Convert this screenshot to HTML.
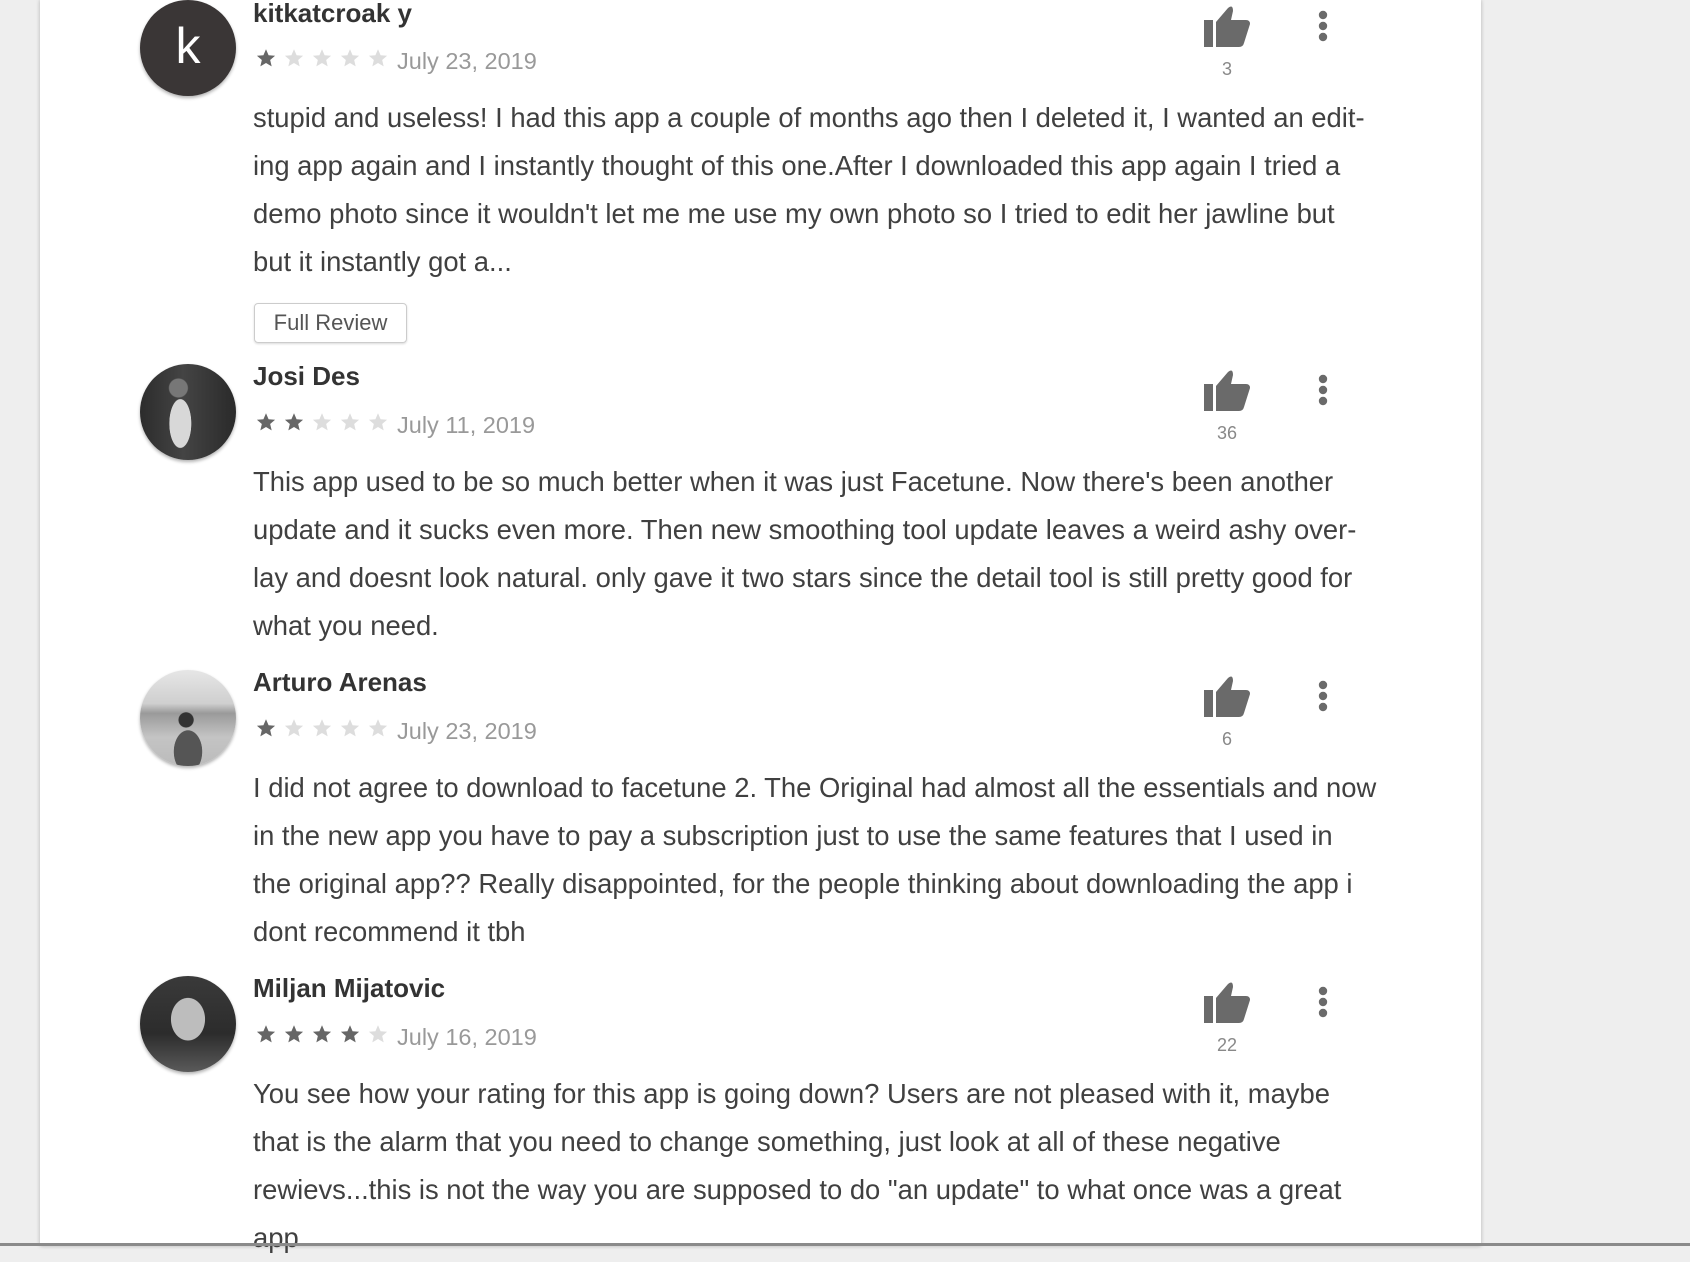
<!DOCTYPE html>
<html><head><meta charset="utf-8">
<style>
html,body{margin:0;padding:0}
body{width:1690px;height:1246px;background:#eeeeee;position:relative;overflow:hidden;font-family:"Liberation Sans",sans-serif}
.card{position:absolute;left:40px;top:0;width:1441px;height:1246px;background:#fff;box-shadow:0 0 4px rgba(0,0,0,.25)}
.bar{position:absolute;left:0;top:1243px;width:1690px;height:3px;background:#8a8a8a}
.av{position:absolute;left:140px;width:96px;height:96px;border-radius:50%;box-shadow:0 2px 3px rgba(0,0,0,.3);overflow:hidden}
.name{position:absolute;left:253px;font-size:26px;font-weight:bold;color:#333;line-height:30px;white-space:nowrap}
.stars{position:absolute;left:256px;height:26px;white-space:nowrap}
.stars svg{display:inline-block;margin-right:8px;vertical-align:middle}
.date{position:absolute;left:397px;font-size:23.5px;color:#999;line-height:28px}
.txt{position:absolute;left:253px;font-size:27.4px;color:#404040;white-space:nowrap;line-height:48px}
.thumb{position:absolute;left:1204px}
.cnt{position:absolute;left:1204px;width:46px;text-align:center;font-size:18px;color:#888}
.dots{position:absolute;left:1318px}
.btn{position:absolute;left:254px;top:303px;width:151px;height:38px;border:1px solid #ccc;border-radius:4px;box-shadow:0 1px 2px rgba(0,0,0,.15);font-size:22px;color:#555;text-align:center;line-height:38px}
</style></head><body>
<div class="card"></div>

<svg width="0" height="0" style="position:absolute">
<defs>
<symbol id="st" viewBox="0 0 24 24"><path d="M12 1.5l3.1 7.2 7.8.6-5.9 5.1 1.8 7.6L12 18l-6.8 4 1.8-7.6-5.9-5.1 7.8-.6z"/></symbol>
<symbol id="th" viewBox="0 0 46 42"><rect x="0" y="15" width="9" height="27" fill="#6a6a6a"/><path d="M12 42V17L24 3Q29 -1 29 6L27 15H42Q46 15 46 19L40 38Q39 42 35 42Z" fill="#6a6a6a"/></symbol>
<symbol id="dt" viewBox="0 0 10 32"><circle cx="5" cy="5" r="4.2" fill="#6a6a6a"/><circle cx="5" cy="16" r="4.2" fill="#6a6a6a"/><circle cx="5" cy="27" r="4.2" fill="#6a6a6a"/></symbol>
</defs></svg>

<!-- Review 1 -->
<div class="av" style="top:0px;background:#3a3636;color:#fff;font-size:50px;text-align:center;line-height:92px">k</div>
<div class="name" style="top:-2px">kitkatcroak y</div>
<div class="stars" style="top:48px"><svg width="20" height="20" fill="#666"><use href="#st"/></svg><svg width="20" height="20" fill="#ddd"><use href="#st"/></svg><svg width="20" height="20" fill="#ddd"><use href="#st"/></svg><svg width="20" height="20" fill="#ddd"><use href="#st"/></svg><svg width="20" height="20" fill="#ddd"><use href="#st"/></svg></div>
<div class="date" style="top:47px">July 23, 2019</div>
<svg class="thumb" style="top:5px" width="46" height="42"><use href="#th"/></svg>
<div class="cnt" style="top:59px">3</div>
<svg class="dots" style="top:10px" width="10" height="32"><use href="#dt"/></svg>
<div class="txt" style="top:94px">stupid and useless! I had this app a couple of months ago then I deleted it, I wanted an edit-<br>ing app again and I instantly thought of this one.After I downloaded this app again I tried a<br>demo photo since it wouldn't let me me use my own photo so I tried to edit her jawline but<br>but it instantly got a...</div>
<div class="btn">Full Review</div>

<!-- Review 2 -->
<div class="av" style="top:364px;background:radial-gradient(ellipse 18px 40px at 42% 62%,#d8d8d8 60%,transparent 62%),radial-gradient(circle 10px at 40% 25%,#777 90%,transparent),linear-gradient(90deg,#2c2c2c,#444 45%,#2a2a2a)"></div>
<div class="name" style="top:361px">Josi Des</div>
<div class="stars" style="top:412px"><svg width="20" height="20" fill="#666"><use href="#st"/></svg><svg width="20" height="20" fill="#666"><use href="#st"/></svg><svg width="20" height="20" fill="#ddd"><use href="#st"/></svg><svg width="20" height="20" fill="#ddd"><use href="#st"/></svg><svg width="20" height="20" fill="#ddd"><use href="#st"/></svg></div>
<div class="date" style="top:411px">July 11, 2019</div>
<svg class="thumb" style="top:369px" width="46" height="42"><use href="#th"/></svg>
<div class="cnt" style="top:423px">36</div>
<svg class="dots" style="top:374px" width="10" height="32"><use href="#dt"/></svg>
<div class="txt" style="top:458px">This app used to be so much better when it was just Facetune. Now there's been another<br>update and it sucks even more. Then new smoothing tool update leaves a weird ashy over-<br>lay and doesnt look natural. only gave it two stars since the detail tool is still pretty good for<br>what you need.</div>

<!-- Review 3 -->
<div class="av" style="top:670px;background:radial-gradient(ellipse 20px 30px at 50% 85%,#555 70%,transparent 72%),radial-gradient(circle 8px at 48% 52%,#333 90%,transparent),linear-gradient(180deg,#e6e6e6 0%,#cfcfcf 35%,#9a9a9a 45%,#c4c4c4 70%,#bbb)"></div>
<div class="name" style="top:667px">Arturo Arenas</div>
<div class="stars" style="top:718px"><svg width="20" height="20" fill="#666"><use href="#st"/></svg><svg width="20" height="20" fill="#ddd"><use href="#st"/></svg><svg width="20" height="20" fill="#ddd"><use href="#st"/></svg><svg width="20" height="20" fill="#ddd"><use href="#st"/></svg><svg width="20" height="20" fill="#ddd"><use href="#st"/></svg></div>
<div class="date" style="top:717px">July 23, 2019</div>
<svg class="thumb" style="top:675px" width="46" height="42"><use href="#th"/></svg>
<div class="cnt" style="top:729px">6</div>
<svg class="dots" style="top:680px" width="10" height="32"><use href="#dt"/></svg>
<div class="txt" style="top:764px">I did not agree to download to facetune 2. The Original had almost all the essentials and now<br>in the new app you have to pay a subscription just to use the same features that I used in<br>the original app?? Really disappointed, for the people thinking about downloading the app i<br>dont recommend it tbh</div>

<!-- Review 4 -->
<div class="av" style="top:976px;background:radial-gradient(ellipse 24px 30px at 50% 45%,#bdbdbd 70%,transparent 72%),linear-gradient(180deg,#3a3a3a,#2c2c2c 60%,#5a5a5a)"></div>
<div class="name" style="top:973px">Miljan Mijatovic</div>
<div class="stars" style="top:1024px"><svg width="20" height="20" fill="#666"><use href="#st"/></svg><svg width="20" height="20" fill="#666"><use href="#st"/></svg><svg width="20" height="20" fill="#666"><use href="#st"/></svg><svg width="20" height="20" fill="#666"><use href="#st"/></svg><svg width="20" height="20" fill="#ddd"><use href="#st"/></svg></div>
<div class="date" style="top:1023px">July 16, 2019</div>
<svg class="thumb" style="top:981px" width="46" height="42"><use href="#th"/></svg>
<div class="cnt" style="top:1035px">22</div>
<svg class="dots" style="top:986px" width="10" height="32"><use href="#dt"/></svg>
<div class="txt" style="top:1070px">You see how your rating for this app is going down? Users are not pleased with it, maybe<br>that is the alarm that you need to change something, just look at all of these negative<br>rewievs...this is not the way you are supposed to do "an update" to what once was a great<br>app</div>

<div class="bar"></div>
</body></html>
